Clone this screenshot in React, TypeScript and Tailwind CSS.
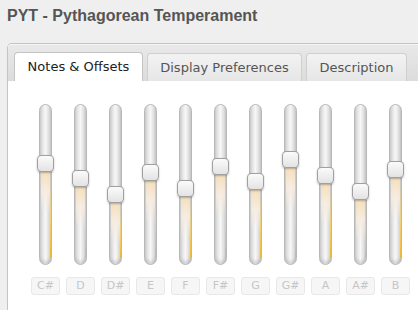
const notes = [
  { name: 'C#', top: 50 },
  { name: 'D', top: 65 },
  { name: 'D#', top: 81 },
  { name: 'E', top: 59 },
  { name: 'F', top: 75 },
  { name: 'F#', top: 53 },
  { name: 'G', top: 68 },
  { name: 'G#', top: 46 },
  { name: 'A', top: 62 },
  { name: 'A#', top: 78 },
  { name: 'B', top: 56 },
]

const Slider = ({ name, top }: { name: string; top: number }) => {
  return (
    <div className="flex w-[35px] shrink-0 flex-col items-center">
      <div className="relative h-[161px] w-[13px] overflow-visible rounded-full border border-[#b8b8b8] bg-gradient-to-r from-[#d4d4d4] via-[#f7f7f7] to-[#cfcfcf] shadow-[inset_0_-3px_3px_rgba(0,0,0,0.12)]">
        {/* warm glow under the handle */}
        <div
          className="absolute inset-x-[1px] h-[45px] bg-gradient-to-b from-[#f6dcb0] via-[#f7ece0] to-transparent opacity-90"
          style={{ top: top + 14 }}
        />
        {/* thin yellow edge on the filled side */}
        <div
          className="absolute bottom-[6px] right-0 w-[1px] bg-gradient-to-b from-transparent via-[#f1d27a] to-[#f0b82a]"
          style={{ top: top + 20 }}
        />
        <div
          className="absolute left-[-3px] h-[17px] w-[17px] rounded-[4px] border border-[#a0a0a0] bg-gradient-to-b from-[#fbfbfb] to-[#e3e3e3] shadow-[0_1px_2px_rgba(0,0,0,0.25)]"
          style={{ top }}
        />
      </div>
      <div className="mt-[12px] flex h-[18px] w-[29px] items-center justify-center rounded-[3px] border border-[#e8e8e8] bg-[#f6f6f6] text-[11px] text-[#c6c6c6]">
        {name}
      </div>
    </div>
  )
}

const App = () => {
  return (
    <div className="h-[310px] w-[418px] overflow-hidden bg-[#efefef] font-['DejaVu_Sans',Verdana,sans-serif]">
      <h1 className="px-[7px] pt-[5px] font-['Liberation_Sans',Arial,sans-serif] text-[16px] font-bold leading-[21px] text-[#555555]">
        PYT - Pythagorean Temperament
      </h1>
      <div className="ml-[7px] mt-[17px] h-[300px] rounded-tl-[5px] border border-r-0 border-[#c4c4c4] bg-white">
        <div className="flex h-[37px] items-end gap-[4px] rounded-tl-[4px] bg-gradient-to-b from-[#e9e9e9] to-[#dcdcdc] pl-[6px] shadow-[inset_0_1px_0_#f6f6f6]">
          <div className="flex h-[29px] w-[129px] items-center justify-center rounded-t-[4px] border border-b-0 border-[#c4c4c4] bg-white text-[13px] text-[#222222]">
            Notes &amp; Offsets
          </div>
          <div className="flex h-[28px] w-[155px] items-center justify-center rounded-t-[4px] border border-b-0 border-[#cfcfcf] bg-gradient-to-b from-[#f3f3f3] to-[#e6e6e6] text-[13px] text-[#555555]">
            Display Preferences
          </div>
          <div className="flex h-[28px] w-[101px] items-center justify-center rounded-t-[4px] border border-b-0 border-[#cfcfcf] bg-gradient-to-b from-[#f3f3f3] to-[#e6e6e6] text-[13px] text-[#555555]">
            Description
          </div>
        </div>
        <div className="flex pl-[20px] pt-[23px]">
          {notes.map((n) => (
            <Slider key={n.name} name={n.name} top={n.top} />
          ))}
        </div>
      </div>
    </div>
  )
}

export default App
